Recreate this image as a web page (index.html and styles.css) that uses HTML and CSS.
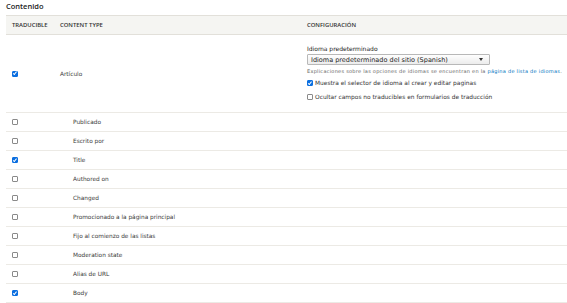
FILE: index.html
```html
<!DOCTYPE html>
<html lang="es">
	<head>
		<meta charset="utf-8">
		<title>Contenido • Idioma</title>
		<link rel="stylesheet" href="styles.css">
	</head>
	<body>
		<h4 class="group-title">Contenido</h4>
		<table class="lang-table">
			<colgroup>
				<col class="w-check">
				<col class="w-type">
				<col>
			</colgroup>
			<thead>
				<tr>
					<th class="col-check">Traducible</th>
					<th class="col-type">Content type</th>
					<th class="col-config">Configuración</th>
				</tr>
			</thead>
			<tbody>
				<tr class="bundle">
					<td class="col-check"><span class="box checked"></span></td>
					<td class="col-type">Artículo</td>
					<td class="col-config">
						<div class="field-label">Idioma predeterminado</div>
						<div class="select">
							<span>Idioma predeterminado del sitio (Spanish)</span>
							<span class="arrow"></span>
						</div>
						<div class="description">Explicaciones sobre las opciones de idiomas se encuentran en la <a href="#">página de lista de idiomas</a>.</div>
						<label class="option"><span class="box checked"></span>Muestra el selector de idioma al crear y editar paginas</label>
						<label class="option"><span class="box"></span>Ocultar campos no traducibles en formularios de traducción</label>
					</td>
				</tr>
				<tr class="field"><td class="col-check"><span class="box"></span></td><td class="col-type">Publicado</td><td></td></tr>
				<tr class="field"><td class="col-check"><span class="box"></span></td><td class="col-type">Escrito por</td><td></td></tr>
				<tr class="field"><td class="col-check"><span class="box checked"></span></td><td class="col-type">Title</td><td></td></tr>
				<tr class="field"><td class="col-check"><span class="box"></span></td><td class="col-type">Authored on</td><td></td></tr>
				<tr class="field"><td class="col-check"><span class="box"></span></td><td class="col-type">Changed</td><td></td></tr>
				<tr class="field"><td class="col-check"><span class="box"></span></td><td class="col-type">Promocionado a la página principal</td><td></td></tr>
				<tr class="field"><td class="col-check"><span class="box"></span></td><td class="col-type">Fijo al comienzo de las listas</td><td></td></tr>
				<tr class="field"><td class="col-check"><span class="box"></span></td><td class="col-type">Moderation state</td><td></td></tr>
				<tr class="field"><td class="col-check"><span class="box"></span></td><td class="col-type">Alias de URL</td><td></td></tr>
				<tr class="field"><td class="col-check"><span class="box checked"></span></td><td class="col-type">Body</td><td></td></tr>
			</tbody>
		</table>
	</body>
</html>
```

FILE: styles.css
```css
html
{
	font-family: "DejaVu Sans", Verdana, sans-serif;
	color: #3b3b3b;
}

body
{
	margin: 0;
	padding: 0 0 0 6px;
	background: #fff;
	overflow: hidden;
}

.group-title
{
	font-family: "Open Sans", sans-serif;
	font-weight: 600;
	font-size: 7.5px;
	color: #222;
	margin: 0;
	padding: 1px 0 0;
	height: 14px;
}

.lang-table
{
	border-collapse: collapse;
	table-layout: fixed;
	width: 580px;
	font-size: 5.8px;
}

.w-check
{
	width: 54px;
}

.w-type
{
	width: 247px;
}

.lang-table th
{
	text-align: left;
	text-transform: uppercase;
	font-family: "Open Sans", sans-serif;
	font-weight: 600;
	font-size: 5.9px;
	color: #333;
	background: #f5f5f2;
	border-top: 1px solid #e2e0da;
	border-bottom: 1px solid #e2e0da;
	height: 18px;
	padding: 0;
}

.lang-table td
{
	box-sizing: border-box;
	padding: 0;
	border-bottom: 1px solid #eceae5;
	vertical-align: middle;
}

.lang-table .col-check
{
	padding-left: 6px;
}

.bundle td
{
	height: 78px;
}

.field td
{
	height: 19px;
}

.field .col-type
{
	padding-left: 13px;
}

.box
{
	display: block;
	flex: none;
	width: 4px;
	height: 4px;
	border: 1px solid #8a8a8a;
	border-radius: 1px;
	background: #fff;
	position: relative;
}

.box.checked
{
	background: #0b6fe0;
	border-color: #0b6fe0;
}

.box.checked::after
{
	content: "";
	position: absolute;
	left: 1px;
	top: -0.5px;
	width: 1.2px;
	height: 2.6px;
	border: solid #fff;
	border-width: 0 1px 1px 0;
	transform: rotate(40deg);
}

.bundle .col-config
{
	vertical-align: top;
	padding-top: 10px;
}

.field-label
{
	font-size: 6px;
	color: #222;
	margin-bottom: 2px;
}

.select
{
	display: flex;
	align-items: center;
	justify-content: space-between;
	width: 172px;
	height: 9px;
	padding: 0 6px 0 3px;
	border: 1px solid #b8b8b8;
	border-radius: 1px;
	background: linear-gradient(#fefefe, #ececec);
	font-size: 6.5px;
	color: #222;
}

.select .arrow
{
	width: 0;
	height: 0;
	border-left: 2px solid transparent;
	border-right: 2px solid transparent;
	border-top: 3px solid #333;
}

.description
{
	font-size: 5px;
	letter-spacing: 0.26px;
	color: #666;
	margin: 3px 0 6px;
}

.description a
{
	color: #0074bd;
	text-decoration: none;
}

.option
{
	display: flex;
	align-items: center;
	gap: 2px;
	font-size: 5.9px;
	color: #333;
	margin-bottom: 8px;
}

.option:last-child
{
	margin-bottom: 0;
}
```
